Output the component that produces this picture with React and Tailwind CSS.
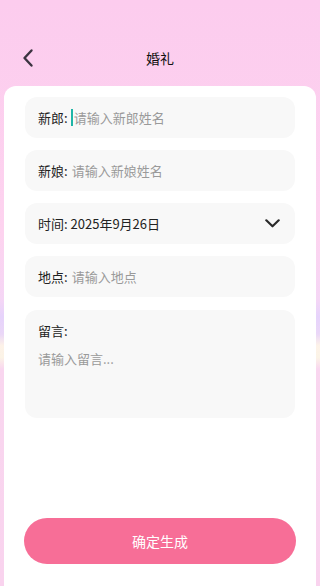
import React from 'react';

const Field = ({ label, placeholder, cursor }) => (
  <div className="h-[41px] rounded-xl bg-[#f8f8f8] flex items-center pl-[13px] pr-3 text-[13px]">
    <span className="text-[#222]">{label}</span>
    {cursor && <span className="ml-[3px] w-[2px] h-[17px] bg-[#1fb5a7]"></span>}
    <span className={`${cursor ? 'ml-[1px]' : 'ml-[4px]'} text-[#9a9a9a]`}>{placeholder}</span>
  </div>
);

export default function App() {
  return (
    <div
      className="w-[320px] h-[586px] overflow-hidden flex flex-col bg-[linear-gradient(180deg,#fcccee_0%,#fdd3ef_40%,#f5d6f5_51%,#e6d3fb_54%,#ead7f7_57%,#fdf2e8_59%,#fbf3e6_61%,#f9d6ef_63%,#f9d3ee_100%)]"
      style={{ fontFamily: '"Noto Sans CJK SC", "Noto Sans", sans-serif' }}
    >
      {/* Header */}
      <div className="h-[86px] shrink-0 flex items-end pb-[18px] relative">
        <button className="ml-[19px] w-[18px] h-[20px] flex items-center justify-center">
          <svg width="14" height="20" viewBox="0 0 14 20" fill="none">
            <path d="M10.5 2.5 L3.5 10 L10.5 17.5" stroke="#3b3340" strokeWidth="2.4" strokeLinecap="round" strokeLinejoin="round" />
          </svg>
        </button>
        <div className="absolute left-0 right-0 bottom-[18px] h-[20px] flex items-center justify-center text-[14px] text-[#111]">
          婚礼
        </div>
      </div>

      {/* Card */}
      <div className="mx-[4px] flex-1 bg-white rounded-t-[12px] px-[21px] pt-[11px] flex flex-col">
        <div className="flex flex-col gap-[12px]">
          <Field label="新郎:" placeholder="请输入新郎姓名" cursor />
          <Field label="新娘:" placeholder="请输入新娘姓名" />
          <div className="h-[41px] rounded-xl bg-[#f8f8f8] flex items-center pl-[13px] pr-[15px] text-[13px] text-[#222]">
            <span>时间: 2025年9月26日</span>
            <svg className="ml-auto" width="15" height="9" viewBox="0 0 15 9" fill="none">
              <path d="M1.3 1.3 L7.5 7.3 L13.7 1.3" stroke="#2a2a2a" strokeWidth="2.2" strokeLinecap="round" strokeLinejoin="round" />
            </svg>
          </div>
          <Field label="地点:" placeholder="请输入地点" />
        </div>
        <div className="mt-[13px] h-[108px] rounded-xl bg-[#f8f8f8] pl-[13px] pt-[11px] text-[13px]">
          <div className="text-[#222]">留言:</div>
          <div className="mt-[8px] text-[#9a9a9a]">请输入留言...</div>
        </div>
        <button className="mt-[100px] mx-[-1px] h-[46px] rounded-full bg-[#f76e97] text-white text-[14px]">
          确定生成
        </button>
      </div>
    </div>
  );
}
